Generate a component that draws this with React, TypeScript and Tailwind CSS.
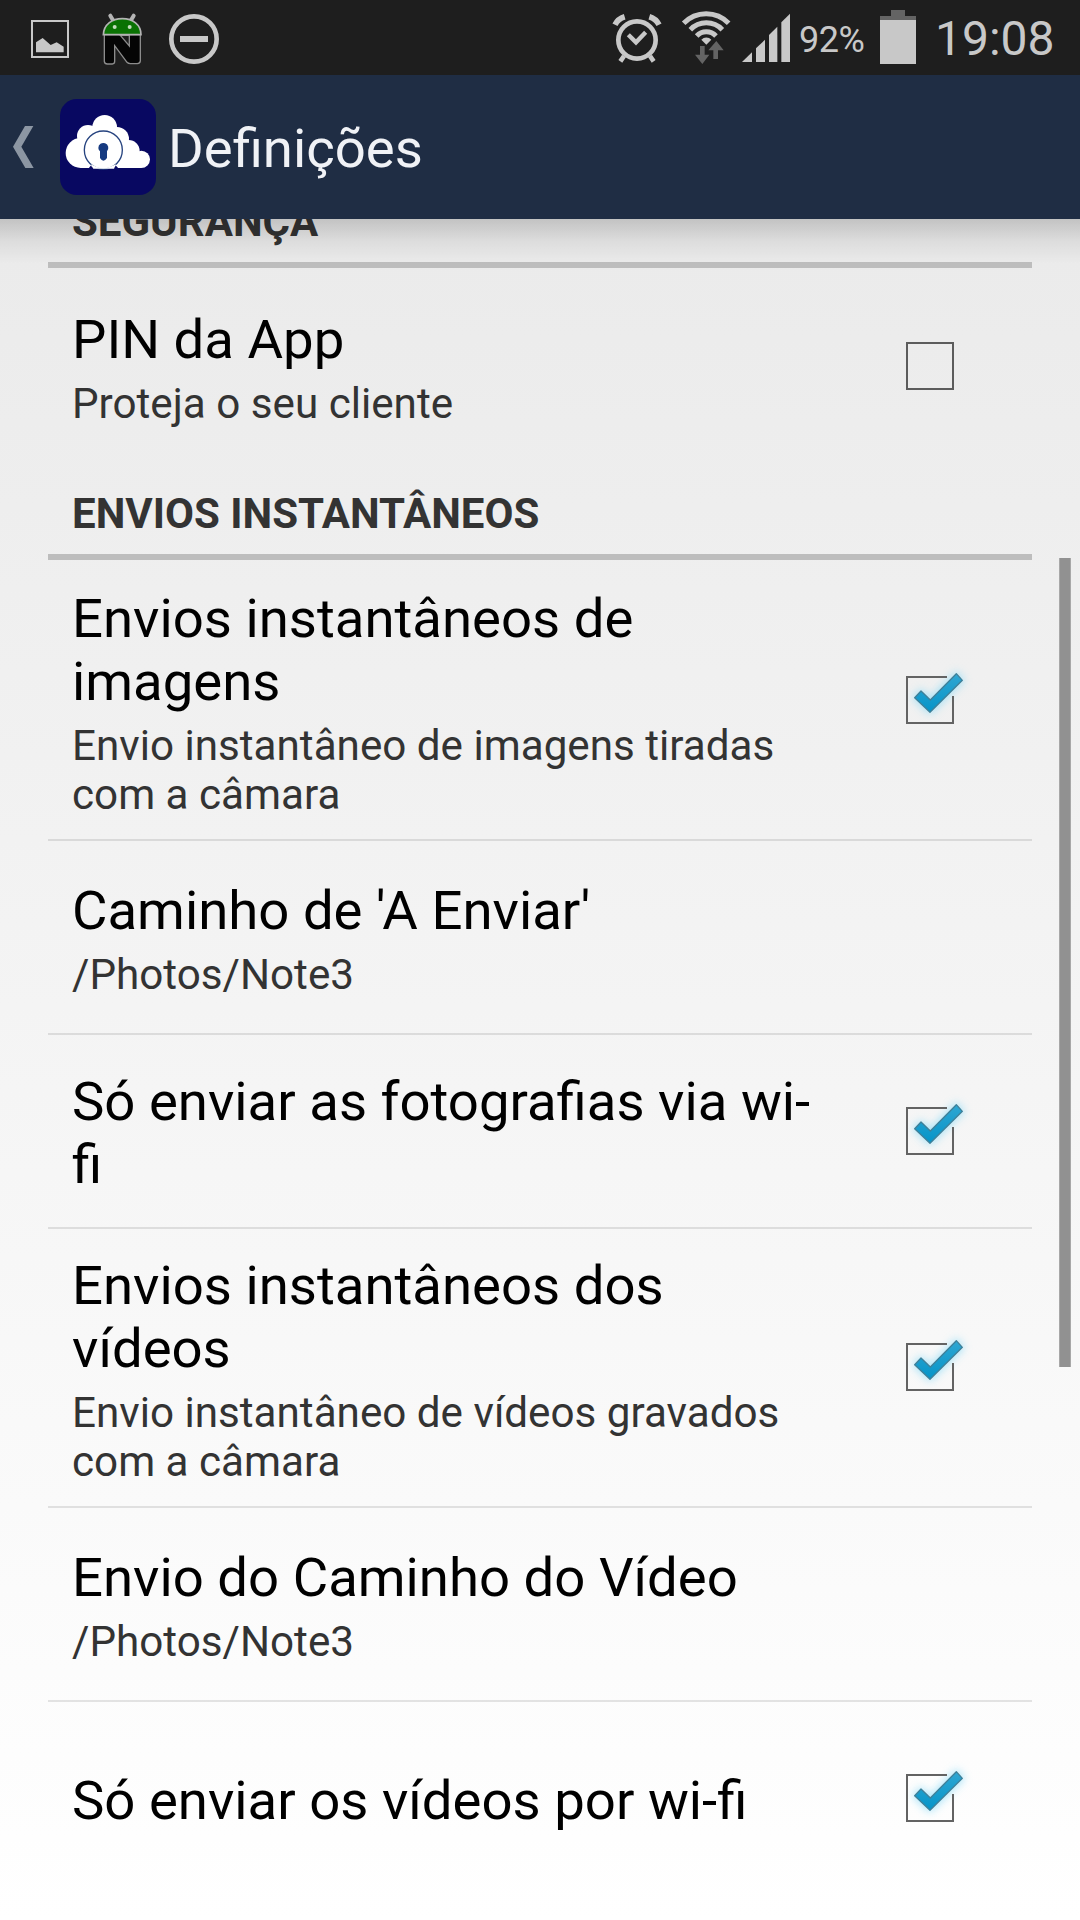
import { useState } from "react";
import type { ReactNode } from "react";

interface Preference {
  id: string;
  title: string;
  summary?: string;
  checked?: boolean;
}

const securityPrefs: Preference[] = [
  { id: "pin", title: "PIN da App", summary: "Proteja o seu cliente", checked: false },
];

const uploadPrefs: Preference[] = [
  {
    id: "instant-images",
    title: "Envios instantâneos de imagens",
    summary: "Envio instantâneo de imagens tiradas com a câmara",
    checked: true,
  },
  { id: "image-path", title: "Caminho de 'A Enviar'", summary: "/Photos/Note3" },
  { id: "image-wifi", title: "Só enviar as fotografias via wi-fi", checked: true },
  {
    id: "instant-videos",
    title: "Envios instantâneos dos vídeos",
    summary: "Envio instantâneo de vídeos gravados com a câmara",
    checked: true,
  },
  { id: "video-path", title: "Envio do Caminho do Vídeo", summary: "/Photos/Note3" },
  { id: "video-wifi", title: "Só enviar os vídeos por wi-fi", checked: true },
];

function StatusBar() {
  return (
    <div className="flex h-[75px] justify-between bg-[#1e1e1e] pl-[30px] pr-[27px] text-[#c8c8c8]">
      <div className="flex">
        {/* Picture */}
        <svg className="h-[75px] w-10" viewBox="90 0 120 225" fill="currentColor">
          <rect x="96" y="63" width="108" height="108" fill="none" stroke="currentColor" strokeWidth="6" />
          <path d="M108 157V127L128 114L152 135L170 127L191 140V157Z" />
        </svg>
        {/* Android head on an N */}
        <svg className="ml-[30px] h-[75px] w-11" viewBox="300 0 132 225">
          <g stroke="#b4b4b4" strokeWidth="12" strokeLinecap="round">
            <path d="M331 47L340 62M401 47L392 62" />
          </g>
          <path
            d="M313 104V184Q314 192 322 192H337Q344 192 344 184V137L381 187Q385 191 391 191H412Q421 190 421 182V104H313Z"
            fill="#050505"
            stroke="#8c8c8c"
            strokeWidth="4"
          />
          <path d="M361 106L388 138V106Z" fill="#1e1e1e" stroke="#8c8c8c" strokeWidth="4" />
          <path d="M310 104C311 73 336 56 367 56S423 73 423 104Z" fill="#0a7203" stroke="#b4b4b4" strokeWidth="5" />
          <circle cx="344" cy="81" r="6" fill="#c2dcbc" />
          <circle cx="389" cy="81" r="6" fill="#c2dcbc" />
        </svg>
        {/* Do not disturb */}
        <svg className="ml-6 h-[75px] w-[52px]" viewBox="504 0 156 225" fill="currentColor">
          <circle cx="582" cy="117" r="68" fill="none" stroke="currentColor" strokeWidth="14" />
          <rect x="540" y="108" width="84" height="18" />
        </svg>
      </div>

      <div className="flex">
        {/* Alarm */}
        <svg className="h-[75px] w-[50px]" viewBox="66 0 150 225" fill="none" stroke="currentColor">
          <circle cx="141" cy="120" r="56" strokeWidth="14" />
          <path d="M115 104L138 127L167 97" strokeWidth="13" />
          <path d="M102 168L91 184M180 168L191 184" strokeWidth="14" />
          <path d="M75 74Q84 56 104 50M207 74Q198 56 178 50" strokeWidth="17" />
        </svg>
        {/* Wi-fi with traffic arrows */}
        <svg className="ml-[18px] h-[75px] w-[52px]" viewBox="270 0 156 225" fill="currentColor">
          <g fill="none" stroke="currentColor" strokeWidth="15">
            <path d="M281 70A94 94 0 0 1 416 70" />
            <path d="M301 89A66 66 0 0 1 397 89" />
            <path d="M320 108A40 40 0 0 1 378 108" />
          </g>
          <path d="M349 134L334 119A21 21 0 0 1 364 119Z" />
          <path d="M330 138H344V164H358L337 192L315 164H330Z" fill="#646464" />
          <path d="M370 177V151H355L379 123L401 151H384V177Z" fill="#646464" />
        </svg>
        {/* Signal */}
        <svg className="ml-[10px] h-[75px] w-12" viewBox="456 0 144 225" fill="currentColor">
          <path d="M456 186L486 157V186Z" />
          <path d="M498 145L525 119V186H498Z" />
          <path d="M537 105L562 80V186H537Z" />
          <path d="M574 67L600 41V186H574Z" />
        </svg>
        <span className="ml-[9px] w-[81px] pt-[19px] text-[36px] leading-[42px] tracking-[-0.5px]">92%</span>
        {/* Battery */}
        <svg className="h-[75px] w-9" viewBox="870 0 108 225">
          <path d="M903 30H945V48H978V60H870V48H903Z" fill="#646464" />
          <rect x="870" y="60" width="108" height="132" fill="currentColor" />
        </svg>
        <span className="ml-[19px] w-[118px] whitespace-nowrap pt-[11px] text-[48px] leading-[56px]">19:08</span>
      </div>
    </div>
  );
}

function AppBar({ title }: { title: string }) {
  return (
    <header className="relative z-10 flex h-36 items-center bg-[#1f2d44] pl-[13px]">
      <svg className="h-[42px] w-[21px]" viewBox="39 168 63 126" fill="#8c96a3">
        <path d="M39 230L75 168H100L64 230L101 294H76Z" />
      </svg>
      {/* Cloud with a lock */}
      <svg className="ml-[26px] size-24" viewBox="180 87 288 288">
        <rect x="180" y="87" width="288" height="288" rx="50" fill="#080861" />
        <g fill="#fff">
          <circle cx="314" cy="172" r="37" />
          <circle cx="264" cy="198" r="33" />
          <circle cx="242" cy="249" r="45" />
          <circle cx="351" cy="207" r="36" />
          <circle cx="386" cy="243" r="33" />
          <circle cx="424" cy="268" r="26" />
          <path d="M242 200H350L400 240L424 294H242Z" />
        </g>
        <path d="M272 287A60 60 0 0 0 348 287L360 300H262Z" fill="#080861" />
        <circle cx="310" cy="240" r="57" fill="#fff" stroke="#26437f" strokeWidth="4" />
        <path d="M272 283Q310 305 348 283L342 296H280Z" fill="#fff" />
        <path d="M295 234A15 15 0 1 1 321 244V264Q310 280 300 264V244Q295 240 295 234Z" fill="#163a80" />
      </svg>
      <h1 className="ml-3 pt-[2px] text-[54.5px] leading-[63px] text-[#f0f2f6]">{title}</h1>
      {/* Drop shadow over the list */}
      <div className="pointer-events-none absolute inset-x-0 top-full h-[45px] bg-gradient-to-b from-black/17 via-black/6 to-transparent" />
    </header>
  );
}

function CheckBox({ checked }: { checked: boolean }) {
  if (!checked) {
    return <div className="size-12 border-2 border-[#5c5c5c]" />;
  }
  return (
    <svg className="mb-[0.25px] size-12 overflow-visible" viewBox="138 108 144 144">
      <defs>
        <linearGradient id="tick" x1="0" y1="0" x2="0" y2="1">
          <stop offset="0" stopColor="#2fa6d2" />
          <stop offset="1" stopColor="#0594c8" />
        </linearGradient>
        <filter id="glow" x="-50%" y="-50%" width="200%" height="200%">
          <feGaussianBlur stdDeviation="12" />
        </filter>
      </defs>
      <path
        d="M162 173L183 151L211 178L289 98L309 121L210 219Z"
        fill="#8fdcf7"
        stroke="#8fdcf7"
        strokeWidth="8"
        opacity="0.75"
        filter="url(#glow)"
      />
      <path d="M261 111H141V249H279V168" fill="none" stroke="#636363" strokeWidth="6" />
      <path
        d="M164 173L183 153L211 180L289 101L307 121L210 217Z"
        fill="url(#tick)"
        stroke="#3f8099"
        strokeWidth="4"
        strokeLinejoin="round"
      />
    </svg>
  );
}

function SectionHeader({ children }: { children: ReactNode }) {
  return (
    <h2 className="mb-[2px] border-b-6 border-[#bdbdbd] pb-4 pl-6 pt-[27px] text-[42px] font-bold leading-[49px] text-[#333]">
      {children}
    </h2>
  );
}

function PreferenceRow({ pref, onToggle }: { pref: Preference; onToggle: (id: string) => void }) {
  return (
    <li
      className="box-content flex min-h-48 items-center justify-between border-b-2 border-black/10 pl-6 pr-[78px] last:border-b-0"
      onClick={() => onToggle(pref.id)}
    >
      <div className="w-[750px] pb-[20.4px] pt-[24.6px]">
        <div className="text-[54.5px] leading-[63px] text-black">{pref.title}</div>
        {pref.summary && <div className="mt-2 text-[42.2px] leading-[49px] text-[#333]">{pref.summary}</div>}
      </div>
      {pref.checked !== undefined && <CheckBox checked={pref.checked} />}
    </li>
  );
}

export default function App() {
  const [prefs, setPrefs] = useState([...securityPrefs, ...uploadPrefs]);

  const toggle = (id: string) => {
    setPrefs((all) => all.map((p) => (p.id === id && p.checked !== undefined ? { ...p, checked: !p.checked } : p)));
  };

  const rows = (group: Preference[]) =>
    prefs
      .filter((p) => group.some((g) => g.id === p.id))
      .map((p) => <PreferenceRow key={p.id} pref={p} onToggle={toggle} />);

  return (
    <div className="h-[1920px] w-[1080px] overflow-hidden bg-gradient-to-b from-[#e8e8e8] to-white font-['Roboto',sans-serif]">
      <StatusBar />
      <AppBar title="Definições" />
      <main className="relative h-[1701px] overflow-hidden">
        {/* The list is scrolled, so its first header sits partly under the bar */}
        <div className="-mt-[49px] px-12">
          <SectionHeader>SEGURANÇA</SectionHeader>
          <ul>{rows(securityPrefs)}</ul>
          <SectionHeader>ENVIOS INSTANTÂNEOS</SectionHeader>
          <ul>{rows(uploadPrefs)}</ul>
        </div>
        <div className="absolute right-[9px] top-[339px] h-[809px] w-3 border-x border-[#a8a8a8] bg-[#919191]" />
      </main>
    </div>
  );
}
